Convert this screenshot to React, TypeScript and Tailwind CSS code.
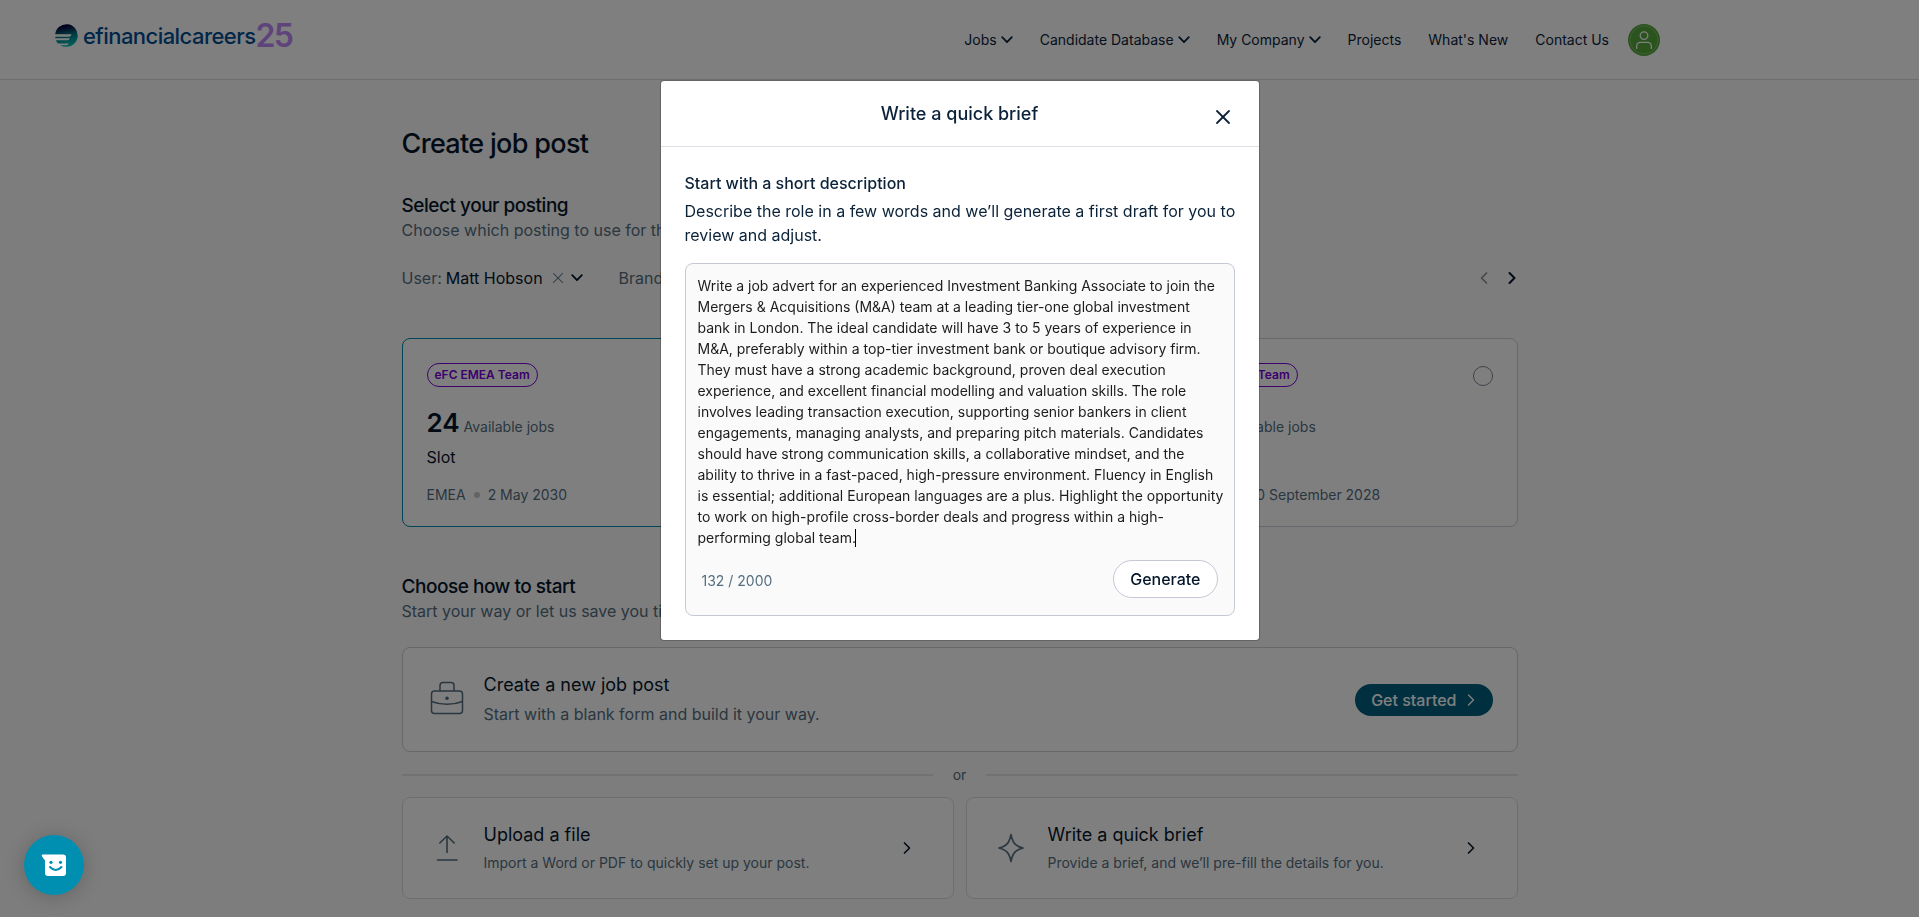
import React, { useState } from 'react';
import { ChevronLeft, ChevronRight, X } from 'lucide-react';

const navItems = [
  { label: 'Jobs', menu: true },
  { label: 'Candidate Database', menu: true },
  { label: 'My Company', menu: true },
  { label: 'Projects', menu: false },
  { label: "What's New", menu: false },
  { label: 'Contact Us', menu: false },
];

const postings = [
  { id: 'slot-1', team: 'eFC EMEA Team', jobs: 24, type: 'Slot', region: 'EMEA', date: '2 May 2030', selected: true },
  { id: 'slot-2', team: 'eFC EMEA Team', jobs: 10, type: 'Slot', region: 'EMEA', date: '1 June 2029', selected: false },
  { id: 'slot-3', team: 'eFC EMEA Team', jobs: 40, type: 'Slot', region: 'EMEA', date: '30 September 2028', selected: false },
];

const defaultBrief =
  'Write a job advert for an experienced Investment Banking Associate to join the Mergers & Acquisitions (M&A) team at a leading tier-one global investment bank in London. The ideal candidate will have 3 to 5 years of experience in M&A, preferably within a top-tier investment bank or boutique advisory firm. They must have a strong academic background, proven deal execution experience, and excellent financial modelling and valuation skills. The role involves leading transaction execution, supporting senior bankers in client engagements, managing analysts, and preparing pitch materials. Candidates should have strong communication skills, a collaborative mindset, and the ability to thrive in a fast-paced, high-pressure environment. Fluency in English is essential; additional European languages are a plus. Highlight the opportunity to work on high-profile cross-border deals and progress within a high-performing global team.';

const Caret: React.FC = () => (
  <svg width="12" height="8" viewBox="0 0 12 8" fill="none" stroke="currentColor" strokeWidth="1.8" strokeLinecap="round" strokeLinejoin="round">
    <path d="M1.2 1.200L6 6.200l4.800-5" />
  </svg>
);

const Logo: React.FC = () => (
  <a href="#" className="flex items-center">
    <svg width="23" height="23" viewBox="0 0 23 23" className="mr-[5px]">
      <defs>
        <linearGradient id="logoFill" x1="0.4" y1="0" x2="0.6" y2="1">
          <stop offset="0.1" stopColor="#04043c" />
          <stop offset="0.5" stopColor="#047884" />
          <stop offset="1" stopColor="#06c4bc" />
        </linearGradient>
      </defs>
      <path
        fill="url(#logoFill)"
        d="M0.2 10.2A11.3 11.3 0 1 1 11.5 22.8Q8 22.8 5.2 21.2H11.5Q13.3 21.2 13.8 19.4H2.9Q1.6 18 0.9 16.2H12.8Q14.3 16.2 14.9 14.2H0.3V12.7H14Q15.8 12.7 16.6 10.2Z"
      />
    </svg>
    <span className="text-[22px] leading-8 font-medium tracking-tight text-[#004c92]">efinancialcareers</span>
    <span className="text-[32px] leading-8 font-semibold tracking-tighter text-[#be88f8]">25</span>
  </a>
);

const Header: React.FC = () => (
  <header className="h-20 bg-white border-b border-[#dcdce0] flex items-center justify-between pl-[55px] pr-[259px]">
    <div className="pb-2">
      <Logo />
    </div>
    <nav className="flex items-center gap-[27px] text-sm text-[#0b2239]">
      {navItems.map((item) => (
        <a key={item.label} href="#" className="flex items-center gap-1">
          {item.label}
          {item.menu && <Caret />}
        </a>
      ))}
      <button aria-label="Account" className="w-8 h-8 -ml-2 rounded-full bg-[#54a63c] text-white flex items-center justify-center">
        <svg width="32" height="32" viewBox="0 0 32 32" fill="none" stroke="currentColor" strokeWidth="1.3" strokeLinecap="round">
          <circle cx="16" cy="16" r="14" strokeOpacity="0.3" strokeWidth="0.8" />
          <circle cx="16" cy="11.6" r="3.8" />
          <path d="M8.7 24.4V22a3.6 3.6 0 0 1 3.6-3.6h7.4a3.6 3.6 0 0 1 3.6 3.6v2.4" />
        </svg>
      </button>
    </nav>
  </header>
);

const SectionHeading: React.FC<{ title: string; text: string }> = ({ title, text }) => (
  <div>
    <h2 className="text-[19px] leading-6 font-medium tracking-tight text-[#05162b]">{title}</h2>
    <p className="text-base text-[#546e7f]">{text}</p>
  </div>
);

const Filters: React.FC = () => (
  <div className="mt-6 flex items-center justify-between">
    <div className="flex items-center gap-9 text-base text-[#546e7f]">
      <div className="flex items-center">
        <button className="flex items-center gap-1">
          User: <span className="text-[#05162b]">Matt Hobson</span>
        </button>
        <button aria-label="Clear user" className="ml-1.5">
          <X size={18} strokeWidth={1.4} />
        </button>
        <button aria-label="Choose user" className="ml-1 text-[#05162b]">
          <Caret />
        </button>
      </div>
      <button>Brand</button>
    </div>
    <div className="flex items-center gap-2 -mr-1">
      <button aria-label="Previous" className="text-[#8b8f99]">
        <ChevronLeft size={20} strokeWidth={2} />
      </button>
      <button aria-label="Next" className="text-[#05162b]">
        <ChevronRight size={20} strokeWidth={2.4} />
      </button>
    </div>
  </div>
);

const Postings: React.FC = () => (
  <div className="mt-12 grid grid-cols-3 gap-6">
    {postings.map((p) => (
      <label
        key={p.id}
        className={`block min-h-[189px] rounded-lg border bg-white px-6 pt-6 pb-5 ${p.selected ? 'border-[#008cb0]' : 'border-[#cdd0da]'}`}
      >
        <span className="flex items-start justify-between">
          <span className="flex h-6 items-center rounded-full border border-[#7a00dc] px-[7px] text-xs font-semibold text-[#7a00dc]">
            {p.team}
          </span>
          <input
            type="radio"
            name="posting"
            defaultChecked={p.selected}
            className="mt-[3px] w-5 h-5 appearance-none rounded-full border border-[#7d8696] checked:border-[6px] checked:border-[#0090b8]"
          />
        </span>
        <span className="mt-5 flex items-baseline gap-1 text-sm text-[#546e7f]">
          <span className="text-[26px] leading-8 font-semibold text-[#05162b]">{p.jobs}</span>
          Available jobs
        </span>
        <span className="mt-1.5 block text-base text-[#05162b]">{p.type}</span>
        <span className="mt-4 flex items-center gap-2 text-sm text-[#546e7f]">
          {p.region}
          <span className="w-1.5 h-1.5 rounded-full bg-[#c4c8d0]" />
          {p.date}
        </span>
      </label>
    ))}
  </div>
);

const BriefcaseIcon: React.FC = () => (
  <svg width="34" height="34" viewBox="0 0 34 34" fill="none" stroke="currentColor" strokeWidth="1.5" strokeLinejoin="round">
    <rect x="1.5" y="10" width="31" height="22.5" rx="3" />
    <path d="M10 10V4.5A3 3 0 0 1 13 1.5h8a3 3 0 0 1 3 3V10" />
    <path d="M1.5 20.5c4.500 1.800 10 2.800 15.500 2.800s11-1 15.500-2.800" />
    <circle cx="17" cy="17.200" r="1.800" fill="currentColor" stroke="none" />
  </svg>
);

const UploadIcon: React.FC = () => (
  <svg width="34" height="34" viewBox="0 0 34 34" fill="none" stroke="currentColor" strokeWidth="1.6" strokeLinecap="round">
    <path d="M17 21.500V5M9.800 12L17 5l7.200 7M7.500 29h19.500" />
  </svg>
);

const SparkleIcon: React.FC = () => (
  <svg width="34" height="34" viewBox="0 0 34 34" fill="none" stroke="currentColor" strokeWidth="1.6" strokeLinejoin="round">
    <path d="M17 3.500c1.600 8.200 4.200 11.600 12 13.500c-7.800 1.900-10.400 5.300-12 13.500c-1.600-8.200-4.200-11.600-12-13.500c7.800-1.900 10.400-5.300 12-13.500Z" />
  </svg>
);

const OptionButton: React.FC<{ icon: React.ReactNode; title: string; text: string }> = ({ icon, title, text }) => (
  <button className="flex items-center rounded-lg border border-[#dddde2] bg-white pl-[27px] pr-9 py-[25px] text-left">
    <span className="mr-5 text-[#546e7f]">{icon}</span>
    <span className="flex flex-1 flex-col gap-[5px]">
      <span className="text-lg leading-6 text-[#05162b]">{title}</span>
      <span className="text-sm leading-[21px] text-[#546e7f]">{text}</span>
    </span>
    <ChevronRight size={20} strokeWidth={2} className="text-[#05162b]" />
  </button>
);

const StartOptions: React.FC = () => (
  <>
    <div className="mt-6 flex items-center rounded-lg border border-[#cfcfd4] bg-white pl-[27px] pr-6 py-[25px]">
      <span className="mr-5 pb-1 text-[#546e7f]">
        <BriefcaseIcon />
      </span>
      <div className="flex flex-1 flex-col gap-[5px]">
        <h3 className="text-lg leading-6 text-[#05162b]">Create a new job post</h3>
        <p className="text-base text-[#546e7f]">Start with a blank form and build it your way.</p>
      </div>
      <button className="flex h-8 items-center gap-1 rounded-full bg-[#006080] pl-4 pr-3 text-base font-medium text-white">
        Get started
        <ChevronRight size={20} strokeWidth={1.6} />
      </button>
    </div>
    <div className="my-3 flex items-center gap-5 text-sm leading-[21px] text-[#546e7f]">
      <span className="h-0.5 flex-1 bg-[#e4e4e8]" />
      or
      <span className="h-0.5 flex-1 bg-[#e4e4e8]" />
    </div>
    <div className="grid grid-cols-2 gap-3">
      <OptionButton icon={<UploadIcon />} title="Upload a file" text="Import a Word or PDF to quickly set up your post." />
      <OptionButton icon={<SparkleIcon />} title="Write a quick brief" text="Provide a brief, and we’ll pre-fill the details for you." />
    </div>
  </>
);

const BriefDialog: React.FC = () => {
  const [brief, setBrief] = useState(defaultBrief);

  return (
    <div className="fixed inset-0 z-10 flex items-start justify-center bg-black/50 pt-20">
      <div role="dialog" aria-modal="true" aria-labelledby="brief-title" className="w-full max-w-[600px] rounded border border-black/20 bg-white bg-clip-padding text-[#0b2239]">
        <div className="relative border-b border-[#dcdfe6] pt-[21px] pb-5">
          <h2 id="brief-title" className="text-center text-lg leading-6 font-medium">Write a quick brief</h2>
          <button aria-label="Close" className="absolute right-6 top-6">
            <X size={24} strokeWidth={1.8} />
          </button>
        </div>
        <div className="p-6">
          <label htmlFor="brief" className="block text-base font-medium">Start with a short description</label>
          <p className="mt-1 -mr-2 text-base">
            Describe the role in a few words and we’ll generate a first draft for you to review and adjust.
          </p>
          <div className="mt-4 rounded-lg border border-[#c5c9d6] bg-[#fafafa] pt-[11px] pb-[17px]">
            <div className="relative flex">
              <textarea
                id="brief"
                rows={13}
                value={brief}
                onChange={(e) => setBrief(e.target.value)}
                className="w-full resize-none overflow-hidden bg-transparent pl-3 pr-2 text-sm leading-[21px] text-[#1c1c1c] outline-none"
              />
              <span className="absolute bottom-px left-[169px] h-[18px] w-px bg-black" />
            </div>
            <div className="mt-3 flex items-center justify-between px-4">
              <span className="pt-1 text-sm text-[#546e7f]">132 / 2000</span>
              <button className="h-[38px] rounded-full border border-[#c5c9d6] bg-white px-4 text-base font-medium text-[#05162b]">
                Generate
              </button>
            </div>
          </div>
        </div>
      </div>
    </div>
  );
};

const ChatButton: React.FC = () => (
  <button aria-label="Chat" className="fixed bottom-[22px] left-6 z-20 flex h-15 w-15 items-center justify-center rounded-full bg-[#008fb0] shadow-[0_2px_20px_rgba(0,0,0,0.2)]">
    <svg width="26" height="24" viewBox="0 0 26 24">
      <path fill="#fff" d="M1.300 1.500H22a3 3 0 0 1 3 3V20a3 3 0 0 1-3 3H7a3 3 0 0 1-3-3V7.500L1 3.500Q0.200 2 1.300 1.500Z" />
      <circle cx="10" cy="9.300" r="1.600" fill="#008fb0" />
      <circle cx="19.500" cy="9.300" r="1.600" fill="#008fb0" />
      <path d="M9 14q5.700 6 11.500 0" fill="none" stroke="#008fb0" strokeWidth="2" strokeLinecap="round" />
    </svg>
  </button>
);

export default function App() {
  return (
    <div className="min-h-screen bg-[#fafafa] font-['Inter',sans-serif]">
      <Header />
      <main className="mx-auto max-w-[1116px] pt-[46px]">
        <h1 className="mb-8 text-[27px] leading-9 font-medium tracking-tight text-[#05162b]">Create job post</h1>
        <SectionHeading title="Select your posting" text="Choose which posting to use for this job." />
        <Filters />
        <Postings />
        <div className="mt-12">
          <SectionHeading title="Choose how to start" text="Start your way or let us save you time." />
        </div>
        <StartOptions />
      </main>
      <BriefDialog />
      <ChatButton />
    </div>
  );
}
